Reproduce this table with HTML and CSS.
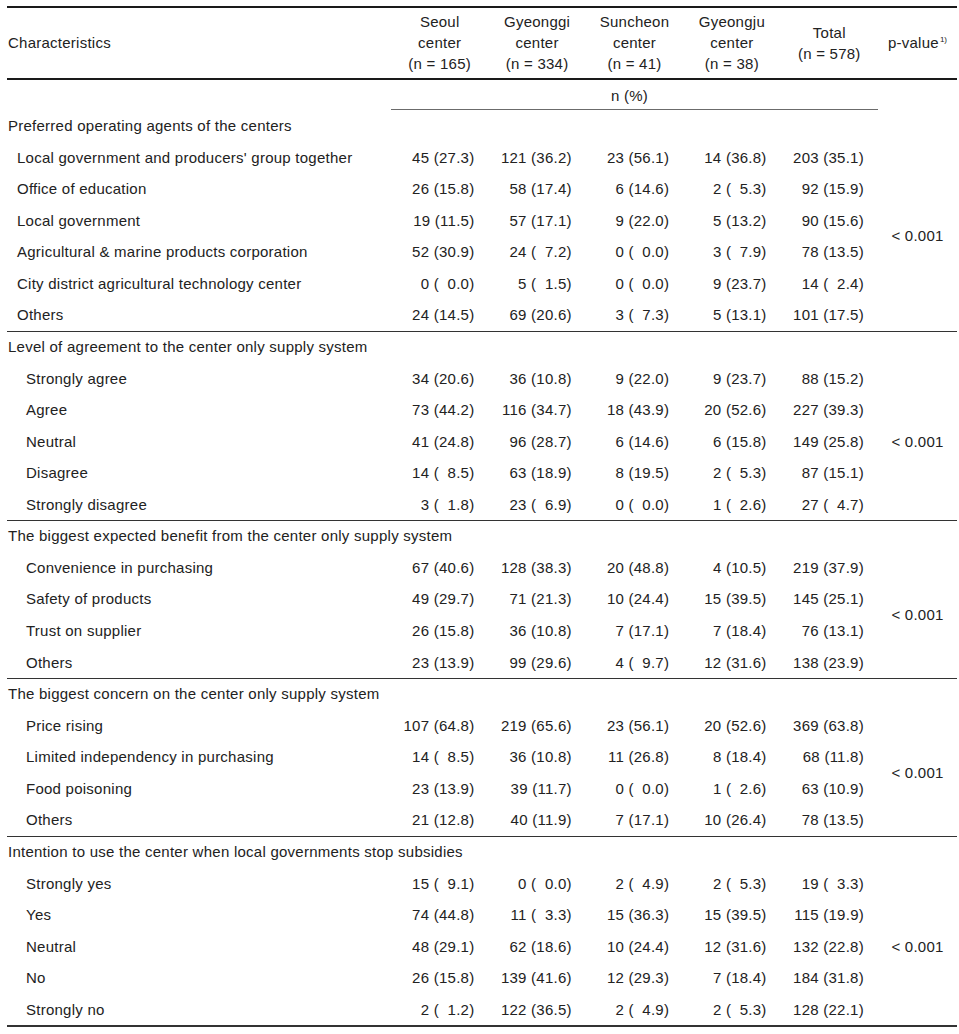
FILE: index.html
```html
<!DOCTYPE html>
<html lang="en">
<head>
<meta charset="utf-8">
<title>Table</title>
<link rel="stylesheet" href="styles.css">
</head>
<body>
<table class="tbl">
  <colgroup>
    <col class="c-char">
    <col class="c-num"><col class="c-num"><col class="c-num"><col class="c-num"><col class="c-num">
    <col class="c-p">
  </colgroup>
  <thead>
    <tr class="hrow">
      <th class="h-char">Characteristics</th>
      <th>Seoul<br>center<br>(n = 165)</th>
      <th>Gyeonggi<br>center<br>(n = 334)</th>
      <th>Suncheon<br>center<br>(n = 41)</th>
      <th>Gyeongju<br>center<br>(n = 38)</th>
      <th>Total<br>(n = 578)</th>
      <th>p-value<sup class="sup">1)</sup></th>
    </tr>
    <tr class="unit-row">
      <td></td>
      <td colspan="5" class="unit">n (%)</td>
      <td></td>
    </tr>
  </thead>
  <tbody>
    <tr><td colspan="7" class="grp first">Preferred operating agents of the centers</td></tr>
    <tr><td class="item i1">Local government and producers' group together</td><td class="n">45 (27.3)</td><td class="n">121 (36.2)</td><td class="n">23 (56.1)</td><td class="n">14 (36.8)</td><td class="n">203 (35.1)</td><td class="p" rowspan="6">&lt; 0.001</td></tr>
    <tr><td class="item i1">Office of education</td><td class="n">26 (15.8)</td><td class="n">58 (17.4)</td><td class="n">6 (14.6)</td><td class="n">2 (&#8199;5.3)</td><td class="n">92 (15.9)</td></tr>
    <tr><td class="item i1">Local government</td><td class="n">19 (11.5)</td><td class="n">57 (17.1)</td><td class="n">9 (22.0)</td><td class="n">5 (13.2)</td><td class="n">90 (15.6)</td></tr>
    <tr><td class="item i1">Agricultural &amp; marine products corporation</td><td class="n">52 (30.9)</td><td class="n">24 (&#8199;7.2)</td><td class="n">0 (&#8199;0.0)</td><td class="n">3 (&#8199;7.9)</td><td class="n">78 (13.5)</td></tr>
    <tr><td class="item i1">City district agricultural technology center</td><td class="n">0 (&#8199;0.0)</td><td class="n">5 (&#8199;1.5)</td><td class="n">0 (&#8199;0.0)</td><td class="n">9 (23.7)</td><td class="n">14 (&#8199;2.4)</td></tr>
    <tr><td class="item i1">Others</td><td class="n">24 (14.5)</td><td class="n">69 (20.6)</td><td class="n">3 (&#8199;7.3)</td><td class="n">5 (13.1)</td><td class="n">101 (17.5)</td></tr>

    <tr><td colspan="7" class="grp">Level of agreement to the center only supply system</td></tr>
    <tr><td class="item">Strongly agree</td><td class="n">34 (20.6)</td><td class="n">36 (10.8)</td><td class="n">9 (22.0)</td><td class="n">9 (23.7)</td><td class="n">88 (15.2)</td><td class="p" rowspan="5">&lt; 0.001</td></tr>
    <tr><td class="item">Agree</td><td class="n">73 (44.2)</td><td class="n">116 (34.7)</td><td class="n">18 (43.9)</td><td class="n">20 (52.6)</td><td class="n">227 (39.3)</td></tr>
    <tr><td class="item">Neutral</td><td class="n">41 (24.8)</td><td class="n">96 (28.7)</td><td class="n">6 (14.6)</td><td class="n">6 (15.8)</td><td class="n">149 (25.8)</td></tr>
    <tr><td class="item">Disagree</td><td class="n">14 (&#8199;8.5)</td><td class="n">63 (18.9)</td><td class="n">8 (19.5)</td><td class="n">2 (&#8199;5.3)</td><td class="n">87 (15.1)</td></tr>
    <tr><td class="item">Strongly disagree</td><td class="n">3 (&#8199;1.8)</td><td class="n">23 (&#8199;6.9)</td><td class="n">0 (&#8199;0.0)</td><td class="n">1 (&#8199;2.6)</td><td class="n">27 (&#8199;4.7)</td></tr>

    <tr><td colspan="7" class="grp">The biggest expected benefit from the center only supply system</td></tr>
    <tr><td class="item">Convenience in purchasing</td><td class="n">67 (40.6)</td><td class="n">128 (38.3)</td><td class="n">20 (48.8)</td><td class="n">4 (10.5)</td><td class="n">219 (37.9)</td><td class="p" rowspan="4">&lt; 0.001</td></tr>
    <tr><td class="item">Safety of products</td><td class="n">49 (29.7)</td><td class="n">71 (21.3)</td><td class="n">10 (24.4)</td><td class="n">15 (39.5)</td><td class="n">145 (25.1)</td></tr>
    <tr><td class="item">Trust on supplier</td><td class="n">26 (15.8)</td><td class="n">36 (10.8)</td><td class="n">7 (17.1)</td><td class="n">7 (18.4)</td><td class="n">76 (13.1)</td></tr>
    <tr><td class="item">Others</td><td class="n">23 (13.9)</td><td class="n">99 (29.6)</td><td class="n">4 (&#8199;9.7)</td><td class="n">12 (31.6)</td><td class="n">138 (23.9)</td></tr>

    <tr><td colspan="7" class="grp">The biggest concern on the center only supply system</td></tr>
    <tr><td class="item">Price rising</td><td class="n">107 (64.8)</td><td class="n">219 (65.6)</td><td class="n">23 (56.1)</td><td class="n">20 (52.6)</td><td class="n">369 (63.8)</td><td class="p" rowspan="4">&lt; 0.001</td></tr>
    <tr><td class="item">Limited independency in purchasing</td><td class="n">14 (&#8199;8.5)</td><td class="n">36 (10.8)</td><td class="n">11 (26.8)</td><td class="n">8 (18.4)</td><td class="n">68 (11.8)</td></tr>
    <tr><td class="item">Food poisoning</td><td class="n">23 (13.9)</td><td class="n">39 (11.7)</td><td class="n">0 (&#8199;0.0)</td><td class="n">1 (&#8199;2.6)</td><td class="n">63 (10.9)</td></tr>
    <tr><td class="item">Others</td><td class="n">21 (12.8)</td><td class="n">40 (11.9)</td><td class="n">7 (17.1)</td><td class="n">10 (26.4)</td><td class="n">78 (13.5)</td></tr>

    <tr><td colspan="7" class="grp">Intention to use the center when local governments stop subsidies</td></tr>
    <tr><td class="item">Strongly yes</td><td class="n">15 (&#8199;9.1)</td><td class="n">0 (&#8199;0.0)</td><td class="n">2 (&#8199;4.9)</td><td class="n">2 (&#8199;5.3)</td><td class="n">19 (&#8199;3.3)</td><td class="p" rowspan="5">&lt; 0.001</td></tr>
    <tr><td class="item">Yes</td><td class="n">74 (44.8)</td><td class="n">11 (&#8199;3.3)</td><td class="n">15 (36.3)</td><td class="n">15 (39.5)</td><td class="n">115 (19.9)</td></tr>
    <tr><td class="item">Neutral</td><td class="n">48 (29.1)</td><td class="n">62 (18.6)</td><td class="n">10 (24.4)</td><td class="n">12 (31.6)</td><td class="n">132 (22.8)</td></tr>
    <tr><td class="item">No</td><td class="n">26 (15.8)</td><td class="n">139 (41.6)</td><td class="n">12 (29.3)</td><td class="n">7 (18.4)</td><td class="n">184 (31.8)</td></tr>
    <tr><td class="item">Strongly no</td><td class="n">2 (&#8199;1.2)</td><td class="n">122 (36.5)</td><td class="n">2 (&#8199;4.9)</td><td class="n">2 (&#8199;5.3)</td><td class="n">128 (22.1)</td></tr>
  </tbody>
</table>
</body>
</html>
```

FILE: styles.css
```css
html, body {
  margin: 0;
  padding: 0;
  background: #ffffff;
}

body {
  font-family: "Liberation Sans", Arial, sans-serif;
  font-size: 15px;
  letter-spacing: 0.25px;
  color: #222222;
}

.tbl {
  margin: 6px 0 0 7px;
  width: 950px;
  table-layout: fixed;
  border-collapse: separate;
  border-spacing: 0;
  border-top: 2px solid #1a1a1a;
  border-bottom: 2px solid #333333;
}

.c-char { width: 384px; }
.c-num { width: 97.4px; }
.c-p { width: 79px; }

.tbl th,
.tbl td {
  padding: 0;
  white-space: nowrap;
}

.hrow th {
  font-weight: normal;
  line-height: 21px;
  height: 63px;
  padding: 3px 0 4px;
  text-align: center;
  vertical-align: middle;
  border-bottom: 2px solid #1a1a1a;
}

.hrow th.h-char {
  text-align: left;
  padding-left: 1px;
}

.sup {
  font-size: 8px;
  letter-spacing: 0;
  line-height: 0;
  vertical-align: 6px;
  margin-left: 1px;
}

.unit-row td {
  line-height: 27px;
  padding-top: 2px;
  text-align: center;
}

.unit-row td.unit {
  border-bottom: 1px solid #6b6b6b;
  padding-right: 10px;
}

.tbl tbody td {
  line-height: 31.57px;
}

.tbl td.grp {
  padding-left: 1px;
  line-height: 30.57px;
  border-top: 1px solid #333333;
}

.tbl td.grp.first {
  line-height: 31.57px;
  border-top: 0;
}

.tbl td.item {
  padding-left: 19px;
}

.tbl td.item.i1 {
  padding-left: 10px;
}

.tbl td.n {
  text-align: right;
  padding-right: 14px;
}

.tbl td.p {
  text-align: center;
  vertical-align: middle;
}
```
